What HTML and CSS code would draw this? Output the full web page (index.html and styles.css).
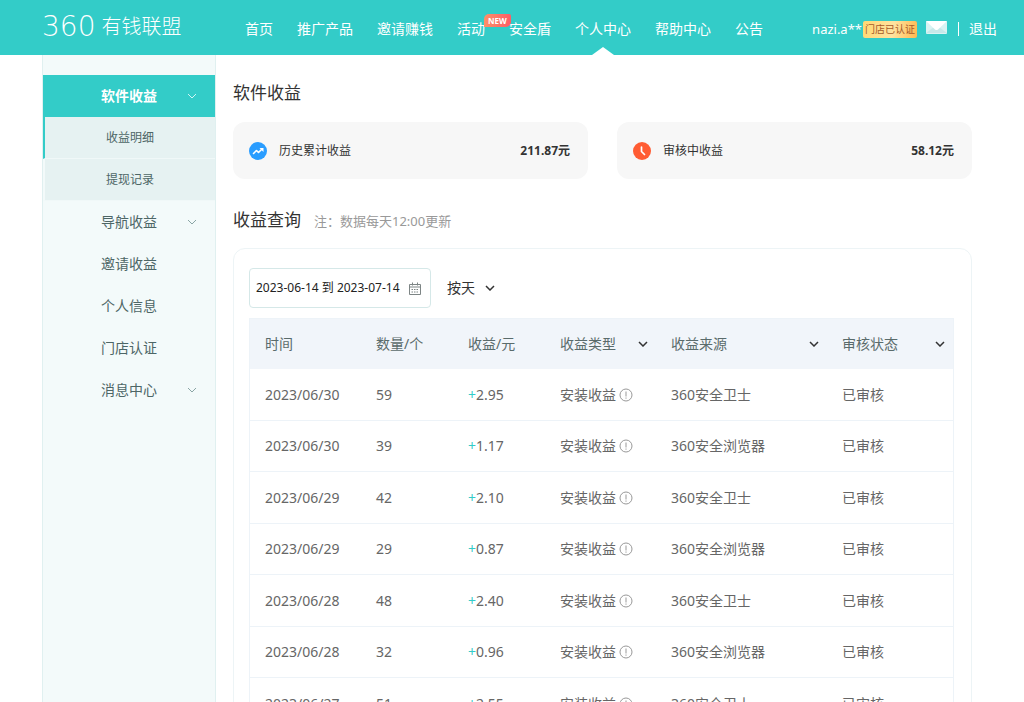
FILE: index.html
```html
<!DOCTYPE html>
<html lang="zh-CN">

<head>
  <meta charset="UTF-8">
  <meta name="viewport" content="width=device-width, initial-scale=1.0">
  <title>360有钱联盟</title>
  <link rel="stylesheet" href="styles.css">
</head>

<body>
  <svg class="sprite" aria-hidden="true">
    <symbol id="arrow" viewBox="0 0 10 6">
      <path d="M1 1l4 4 4-4" fill="none" stroke="currentColor" />
    </symbol>
    <symbol id="tip" viewBox="0 0 14 14">
      <circle cx="7" cy="7" r="6" fill="none" stroke="currentColor" />
      <path d="M7 3.5v5M7 9.5v1.2" stroke="currentColor" />
    </symbol>
  </svg>

  <header class="header">
    <a class="logo" href="#"><span class="logo-num">360</span>有钱联盟</a>
    <nav class="nav">
      <a href="#">首页</a>
      <a href="#">推广产品</a>
      <a href="#">邀请赚钱</a>
      <a href="#">活动<span class="new">NEW</span></a>
      <a href="#">安全盾</a>
      <a class="active" href="#">个人中心</a>
      <a href="#">帮助中心</a>
      <a href="#">公告</a>
    </nav>
    <div class="user">
      <a class="name" href="#">nazi.a**</a>
      <span class="badge">门店已认证</span>
      <a class="mail" href="#" aria-label="消息">
        <svg width="21" height="13" viewBox="0 0 21 13">
          <rect width="21" height="13" rx="1" fill="#d9f3f3" />
          <path d="M0 12L8 6h5l8 6z" fill="#c5e8e9" />
          <path d="M0 0h21l-9 8.500q-1.500 1.200-3 0z" fill="#fff" />
        </svg>
      </a>
      <span class="line"></span>
      <a href="#">退出</a>
    </div>
  </header>

  <div class="container">
    <aside class="sidebar">
      <a class="item active" href="#">软件收益<svg class="arrow"><use href="#arrow" /></svg></a>
      <div class="submenu">
        <a class="current" href="#">收益明细</a>
        <a href="#">提现记录</a>
      </div>
      <a class="item" href="#">导航收益<svg class="arrow"><use href="#arrow" /></svg></a>
      <a class="item" href="#">邀请收益</a>
      <a class="item" href="#">个人信息</a>
      <a class="item" href="#">门店认证</a>
      <a class="item" href="#">消息中心<svg class="arrow"><use href="#arrow" /></svg></a>
    </aside>

    <main class="main">
      <h2>软件收益</h2>
      <div class="cards">
        <div class="card">
          <svg width="18" height="18" viewBox="0 0 18 18">
            <circle cx="9" cy="9" r="9" fill="#2a9dff" />
            <path d="M4.500 11.500l3-3 2 2 3.500-3.500" fill="none" stroke="#fff" stroke-width="1.600" stroke-linecap="round" stroke-linejoin="round" />
            <path d="M10.500 6h4v4z" fill="#fff" />
          </svg>
          <span>历史累计收益</span>
          <b>211.87元</b>
        </div>
        <div class="card">
          <svg width="18" height="18" viewBox="0 0 18 18">
            <circle cx="9" cy="9" r="9" fill="#ff5c33" />
            <path d="M8.500 5v4.500l3 3" fill="none" stroke="#fff" stroke-width="1.700" stroke-linecap="round" stroke-linejoin="round" />
          </svg>
          <span>审核中收益</span>
          <b>58.12元</b>
        </div>
      </div>

      <h2>收益查询<small>注：数据每天12:00更新</small></h2>
      <section class="panel">
        <div class="tools">
          <label class="date">
            <input type="text" value="2023-06-14 到 2023-07-14" aria-label="日期范围" readonly>
            <svg width="12" height="13" viewBox="0 0 12 13" fill="none" stroke="#7d8585">
              <path d="M.5 2.500h11v10H.5zM.5 5h11M3.500.5v3M8.500.5v3" />
              <path d="M2.500 7.500h7M2.500 10h7" stroke-dasharray="1.500 1" />
            </svg>
          </label>
          <label class="filter">
            <select aria-label="统计方式">
              <option>按天</option>
              <option>按月</option>
            </select>
            <svg class="arrow"><use href="#arrow" /></svg>
          </label>
        </div>

        <table>
          <thead>
            <tr>
              <th class="col-date">时间</th>
              <th class="col-num">数量/个</th>
              <th class="col-money">收益/元</th>
              <th class="col-type">
                <label class="filter">
                  <select aria-label="收益类型"><option>收益类型</option></select>
                  <svg class="arrow"><use href="#arrow" /></svg>
                </label>
              </th>
              <th class="col-source">
                <label class="filter">
                  <select aria-label="收益来源"><option>收益来源</option></select>
                  <svg class="arrow"><use href="#arrow" /></svg>
                </label>
              </th>
              <th class="col-status">
                <label class="filter">
                  <select aria-label="审核状态"><option>审核状态</option></select>
                  <svg class="arrow"><use href="#arrow" /></svg>
                </label>
              </th>
            </tr>
          </thead>
          <tbody>
            <tr>
              <td>2023/06/30</td>
              <td>59</td>
              <td><i>+</i>2.95</td>
              <td>安装收益<svg class="tip"><use href="#tip" /></svg></td>
              <td>360安全卫士</td>
              <td>已审核</td>
            </tr>
            <tr>
              <td>2023/06/30</td>
              <td>39</td>
              <td><i>+</i>1.17</td>
              <td>安装收益<svg class="tip"><use href="#tip" /></svg></td>
              <td>360安全浏览器</td>
              <td>已审核</td>
            </tr>
            <tr>
              <td>2023/06/29</td>
              <td>42</td>
              <td><i>+</i>2.10</td>
              <td>安装收益<svg class="tip"><use href="#tip" /></svg></td>
              <td>360安全卫士</td>
              <td>已审核</td>
            </tr>
            <tr>
              <td>2023/06/29</td>
              <td>29</td>
              <td><i>+</i>0.87</td>
              <td>安装收益<svg class="tip"><use href="#tip" /></svg></td>
              <td>360安全浏览器</td>
              <td>已审核</td>
            </tr>
            <tr>
              <td>2023/06/28</td>
              <td>48</td>
              <td><i>+</i>2.40</td>
              <td>安装收益<svg class="tip"><use href="#tip" /></svg></td>
              <td>360安全卫士</td>
              <td>已审核</td>
            </tr>
            <tr>
              <td>2023/06/28</td>
              <td>32</td>
              <td><i>+</i>0.96</td>
              <td>安装收益<svg class="tip"><use href="#tip" /></svg></td>
              <td>360安全浏览器</td>
              <td>已审核</td>
            </tr>
            <tr>
              <td>2023/06/27</td>
              <td>51</td>
              <td><i>+</i>2.55</td>
              <td>安装收益<svg class="tip"><use href="#tip" /></svg></td>
              <td>360安全卫士</td>
              <td>已审核</td>
            </tr>
          </tbody>
        </table>
      </section>
    </main>
  </div>
</body>

</html>
```
FILE: styles.css
```css
* {
  box-sizing: border-box;
}

body {
  margin: 0;
  font-family: "Noto Sans", "Noto Sans CJK SC", sans-serif;
  font-size: 14px;
  line-height: 20px;
  color: #666;
  background-color: #fff;
}

a {
  color: inherit;
  text-decoration: none;
}

svg {
  flex: none;
}

.sprite {
  display: none;
}

.arrow {
  width: 10px;
  height: 6px;
}

/* 顶部导航 */
.header {
  display: flex;
  align-items: center;
  height: 55px;
  padding: 3px 27px 0 42px;
  background-color: #33ccc8;
  color: #fff;
  white-space: nowrap;
}

.logo {
  display: flex;
  align-items: center;
  width: 203px;
  height: 28px;
  margin-bottom: 4px;
  font-size: 20px;
  font-weight: 300;
}

.logo-num {
  font-family: "DejaVu Sans Light", "DejaVu Sans", sans-serif;
  font-size: 28px;
  font-weight: 200;
  margin-right: 6px;
}

.nav {
  display: flex;
  gap: 24px;
}

.nav a {
  position: relative;
  height: 52px;
  line-height: 52px;
}

.nav .active::after {
  content: "";
  position: absolute;
  left: 50%;
  bottom: 0;
  margin-left: -11px;
  border: 11px solid transparent;
  border-top: 0;
  border-bottom: 8px solid #fff;
}

.new {
  position: absolute;
  top: 11px;
  left: 27px;
  padding: 0 4px;
  border-radius: 5px 2px 5px 0;
  background: linear-gradient(90deg, #ff9068, #ff5c66);
  font-size: 8px;
  font-weight: bold;
  line-height: 13px;
}

.user {
  display: flex;
  align-items: center;
  margin-left: auto;
}

.name {
  font-size: 13px;
}

.badge {
  margin-left: 1px;
  padding: 0 2px;
  border-radius: 2px;
  background: linear-gradient(100deg, #ffd873, #ffe3a0 55%, #ffb94f);
  color: #a85b2b;
  font-size: 10px;
  line-height: 17px;
}

.mail {
  display: flex;
  margin: 0 11px 3px 9px;
}

.line {
  width: 1px;
  height: 14px;
  margin-right: 10px;
  background-color: #fff;
}

/* 主体 */
.container {
  display: flex;
  min-height: calc(100vh - 55px);
  padding: 0 52px 0 42px;
}

.sidebar {
  flex: none;
  width: 174px;
  padding-top: 20px;
  border: 1px solid #e0f0f0;
  border-top: 0;
  border-bottom: 0;
  background-color: #f3fafa;
  color: #4d6666;
}

.item {
  position: relative;
  display: block;
  line-height: 42px;
  text-align: center;
}

.item .arrow {
  position: absolute;
  top: 18px;
  right: 18px;
  color: #8aa5a5;
}

.item.active {
  background-color: #33ccc8;
  color: #fff;
  font-weight: bold;
}

.item.active .arrow {
  color: #d0f5f4;
}

.submenu a {
  display: block;
  border-left: 2px solid #f3fafa;
  border-bottom: 1px solid #f0f8f8;
  background-color: #e6f2f2;
  font-size: 12px;
  line-height: 41px;
  text-align: center;
}

.submenu .current {
  border-left-color: #33ccc8;
}

.main {
  flex: 1;
  padding: 27px 0 40px 17px;
}

h2 {
  margin: 0;
  color: #333;
  font-size: 17px;
  font-weight: normal;
  line-height: 22px;
}

h2 small {
  margin-left: 13px;
  color: #999;
  font-size: 13px;
}

.cards {
  display: flex;
  gap: 29px;
  margin: 18px 0 30px;
}

.card {
  display: flex;
  flex: 1;
  align-items: center;
  gap: 12px;
  height: 57px;
  padding: 0 18px 0 16px;
  border-radius: 12px;
  background-color: #f7f7f7;
  color: #333;
  font-size: 12px;
}

.card b {
  margin-left: auto;
}

.panel {
  margin-top: 16px;
  padding: 19px 17px 19px 15px;
  border: 1px solid #edf4f6;
  border-radius: 12px;
}

.tools {
  display: flex;
  align-items: center;
  gap: 16px;
  margin-bottom: 10px;
}

.date {
  display: flex;
  align-items: center;
  width: 182px;
  height: 40px;
  padding: 0 9px 0 6px;
  border: 1px solid #d5e8e8;
  border-radius: 4px;
}

.date input {
  flex: 1;
  min-width: 0;
  padding: 0;
  border: 0;
  outline: none;
  background: none;
  color: #222;
  font: inherit;
  font-size: 12px;
}

.filter {
  display: flex;
  align-items: center;
  justify-content: space-between;
  gap: 10px;
  color: #333;
}

.filter select {
  appearance: none;
  padding: 0;
  border: 0;
  outline: none;
  background: none;
  color: inherit;
  font: inherit;
  cursor: pointer;
}

.filter .arrow {
  stroke-width: 1.5px;
}

table {
  width: 100%;
  border: 1px solid #edf3f8;
  border-spacing: 0;
  table-layout: fixed;
}

th,
td {
  padding: 0 0 0 15px;
  text-align: left;
  font-weight: normal;
  white-space: nowrap;
}

th {
  height: 50px;
  background-color: #f1f5fa;
  color: #5a6b6b;
}

th .filter {
  padding-right: 8px;
}

th .filter select {
  color: #5a6b6b;
}

td {
  height: 52px;
  border-bottom: 1px solid #edf3f8;
}

tr:nth-child(even) td {
  height: 51px;
}

td i {
  color: #33ccc8;
  font-style: normal;
}

.tip {
  width: 14px;
  height: 14px;
  margin-left: 3px;
  color: #999;
  vertical-align: -2px;
}

.col-date,
.col-type {
  width: 111px;
}

.col-num,
.col-money {
  width: 92px;
}

.col-source {
  width: 171px;
}
```
